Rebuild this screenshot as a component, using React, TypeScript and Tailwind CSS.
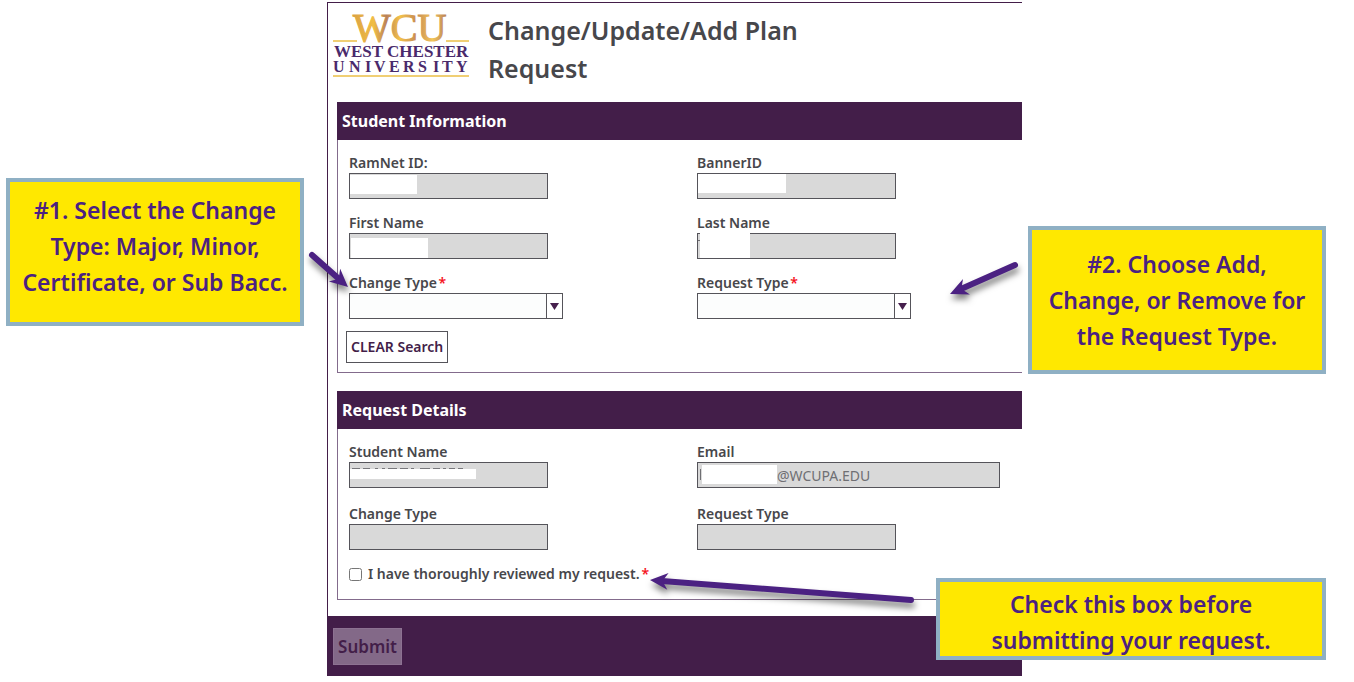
import { useId } from "react";
import type { ReactNode } from "react";

function Logo() {
  return (
    <svg className="mt-1 h-[72px] w-[140px] shrink-0 overflow-visible" viewBox="0 0 140 72" role="img" aria-label="West Chester University">
      <defs>
        <linearGradient id="gold" x1="0" y1="0" x2="1" y2="0">
          <stop offset="0" stopColor="#dba243" />
          <stop offset="0.22" stopColor="#f0bd45" />
          <stop offset="0.36" stopColor="#b98058" />
          <stop offset="0.5" stopColor="#f3c24a" />
          <stop offset="0.68" stopColor="#c78a52" />
          <stop offset="0.85" stopColor="#f2c65a" />
          <stop offset="1" stopColor="#b98058" />
        </linearGradient>
      </defs>
      <text x="21" y="30" fontSize="40" fontFamily="Liberation Serif, serif" fill="url(#gold)" stroke="url(#gold)" strokeWidth="1.2">WCU</text>
      <path d="M1 30h24M114 30h23M1 65h136" stroke="#f0cf74" strokeWidth="2" />
      <text x="2" y="46" fontSize="17" fontWeight="700" fontFamily="Liberation Serif, serif" fill="#4a2a6b">WEST CHESTER</text>
      <text x="1 17 33 42 57 71 86 101 110 124" y="61" fontSize="16" fontWeight="700" fontFamily="Liberation Serif, serif" fill="#4a2a6b">UNIVERSITY</text>
    </svg>
  );
}

function Field({ label, width = "w-[199px]", value, pad = "px-1", children }: { label: string; width?: string; value?: string; pad?: string; children?: ReactNode }) {
  const id = useId();
  return (
    <div>
      <label htmlFor={id} className="block text-sm/5 font-semibold">{label}</label>
      <div className={`relative h-[26px] ${width}`}>
        <input id={id} disabled defaultValue={value} className={`block h-full w-full border border-[#55545a] bg-[#d9d9d9] text-sm text-[#6f6f73] ${pad}`} />
        {children}
      </div>
    </div>
  );
}

function Choice({ label, options }: { label: string; options: string[] }) {
  const id = useId();
  return (
    <div>
      <label htmlFor={id} className="block text-sm/5 font-semibold">
        {label} <span className="-ml-0.5 text-[#f5121d]">*</span>
      </label>
      <div className="relative h-[26px] w-[214px]">
        <select id={id} defaultValue="" className="block h-full w-full appearance-none border border-[#55545a] bg-[#fcfdfd] px-1 text-sm">
          <option value=""></option>
          {options.map((o) => <option key={o}>{o}</option>)}
        </select>
        <span className="pointer-events-none absolute inset-y-0 right-0 flex w-[17px] items-center justify-center border border-[#55545a] bg-white">
          <svg className="h-[7px] w-[9px]" viewBox="0 0 9 7"><path d="M0 0h9L4.500 7z" fill="#46204d" /></svg>
        </span>
      </div>
    </div>
  );
}

function Section({ title, children }: { title: string; children: ReactNode }) {
  return (
    <section className="ml-[9px] border-b border-l border-[#836b8c]">
      <h2 className="-ml-px bg-[#431e49] pl-[5px] text-base/[38px] font-bold text-white">{title}</h2>
      {children}
    </section>
  );
}

function Callout({ lines, className }: { lines: string[]; className: string }) {
  return (
    <div className={`border-4 border-[#8fb0c4] bg-[#ffe800] text-center text-[23px]/9 font-semibold text-[#4b2182] ${className}`}>
      {lines.map((l) => <p key={l} className="whitespace-nowrap">{l}</p>)}
    </div>
  );
}

function Arrow({ w, h, from, to, className }: { w: number; h: number; from: [number, number]; to: [number, number]; className: string }) {
  const len = Math.hypot(to[0] - from[0], to[1] - from[1]);
  const angle = (Math.atan2(to[1] - from[1], to[0] - from[0]) * 180) / Math.PI;
  return (
    <svg aria-hidden="true" className={`pointer-events-none absolute overflow-visible drop-shadow-[1px_5px_3px_rgba(0,0,0,0.5)] ${className}`} width={w} height={h} viewBox={`0 0 ${w} ${h}`}>
      <g transform={`translate(${from[0]} ${from[1]}) rotate(${angle})`} fill="#4b2182">
        <path d={`M0 0H${len - 12}`} stroke="#4b2182" strokeWidth="6" strokeLinecap="round" />
        <path d={`M${len} 0L${len - 18} -8.500L${len - 12.500} 0L${len - 18} 8.500Z`} />
      </g>
    </svg>
  );
}

export default function App() {
  return (
    <div className="relative flex min-h-screen items-start bg-white font-['Noto_Sans',sans-serif] text-[#47474b]">
      <aside className="w-[327px] shrink-0 pt-[178px] pl-1.5">
        <div className="relative w-[298px]">
          <Callout className="h-[148px] pt-2.5" lines={["#1. Select the Change", "Type: Major, Minor,", "Certificate, or Sub Bacc."]} />
          <Arrow className="top-[70px] left-[300px] z-10" w={50} h={50} from={[6, 7]} to={[42, 39]} />
        </div>
      </aside>

      <form className="mt-0.5 min-w-0 flex-1 border-t border-l border-[#431e49]" onSubmit={(e) => e.preventDefault()}>
        <header className="flex h-[99px] gap-4 pt-1 pl-1">
          <Logo />
          <h1 className="max-w-[360px] pt-1 text-[25px]/[38px] font-semibold">Change/Update/Add Plan Request</h1>
        </header>

        <Section title="Student Information">
          <div className="px-[11px] pt-[13px] pb-[9px]">
            <div className="grid grid-cols-[348px_1fr] gap-y-3.5">
              <Field label="RamNet ID:"><span className="absolute top-0.5 left-px h-[19px] w-[67px] bg-white" /></Field>
              <Field label="BannerID"><span className="absolute top-px left-px h-[19px] w-[88px] bg-white" /></Field>
              <Field label="First Name"><span className="absolute top-[5px] left-0.5 h-5 w-[77px] bg-white" /></Field>
              <Field label="Last Name">
                <span className="absolute top-0 left-[3px] h-[25px] w-[50px] bg-white" />
                <span className="absolute top-[7px] left-px h-px w-0.5 bg-[#6f6f73]" />
              </Field>
              <Choice label="Change Type" options={["Major", "Minor", "Certificate", "Sub Bacc"]} />
              <Choice label="Request Type" options={["Add", "Change", "Remove"]} />
            </div>
            <button type="button" className="mt-3 -ml-[3px] block h-8 border border-[#55545a] bg-white px-1 text-sm font-semibold text-[#431e49]">CLEAR Search</button>
          </div>
        </Section>

        <div className="h-[18px]" />

        <Section title="Request Details">
          <div className="px-[11px] pt-[13px] pb-[15px]">
            <div className="grid grid-cols-[348px_1fr] gap-y-4">
              <Field label="Student Name">
                <span className="absolute top-[7px] left-px h-2.5 w-[126px] bg-white" />
                <svg className="absolute top-1.5 left-[3px] h-px w-[112px]" viewBox="0 0 112 1"><path d="M0 .5h8M11 .5h7M23 .5h3M30 .5h3M36 .5h9M48 .5h8M59 .5h3M68 .5h10M81 .5h7M91 .5h3M97 .5h6M106 .5h5" stroke="#77777b" /></svg>
              </Field>
              <Field label="Email" width="w-[303px]" value="@WCUPA.EDU" pad="pl-[79px] pr-1">
                <span className="absolute top-[7px] left-[3px] h-[11px] w-px bg-[#6f6f73]" />
                <span className="absolute top-[3px] left-[5px] h-[19px] w-[75px] bg-white" />
              </Field>
              <Field label="Change Type" />
              <Field label="Request Type" />
            </div>
            <label className="mt-3.5 flex h-5 items-center text-sm/5 font-semibold">
              <input type="checkbox" className="mr-1.5 size-[13px]" />
              I have thoroughly reviewed my request.<span className="ml-0.5 text-[#f5121d]">*</span>
            </label>
          </div>
        </Section>

        <footer className="mt-4 -ml-px h-[60px] bg-[#431e49] pt-3 pl-1.5">
          <button type="submit" disabled className="block h-[37px] w-[69px] border border-[#8d7292] bg-[#836988] text-[17px] font-semibold text-[#431e49]">Submit</button>
        </footer>
      </form>

      <aside className="w-[332px] shrink-0 pt-[226px] pl-1.5">
        <div className="relative w-[298px]">
          <Callout className="h-[148px] pt-4" lines={["#2. Choose Add,", "Change, or Remove for", "the Request Type."]} />
          <Arrow className="top-[30px] -left-[80px]" w={72} h={44} from={[67, 9]} to={[2, 38]} />
        </div>
      </aside>

      <div className="absolute top-[578px] right-7 w-[390px]">
        <Callout className="h-[82px] pt-1" lines={["Check this box before", "submitting your request."]} />
        <Arrow className="top-0 -left-[288px]" w={270} h={30} from={[263, 22]} to={[2, 2]} />
      </div>
    </div>
  );
}
